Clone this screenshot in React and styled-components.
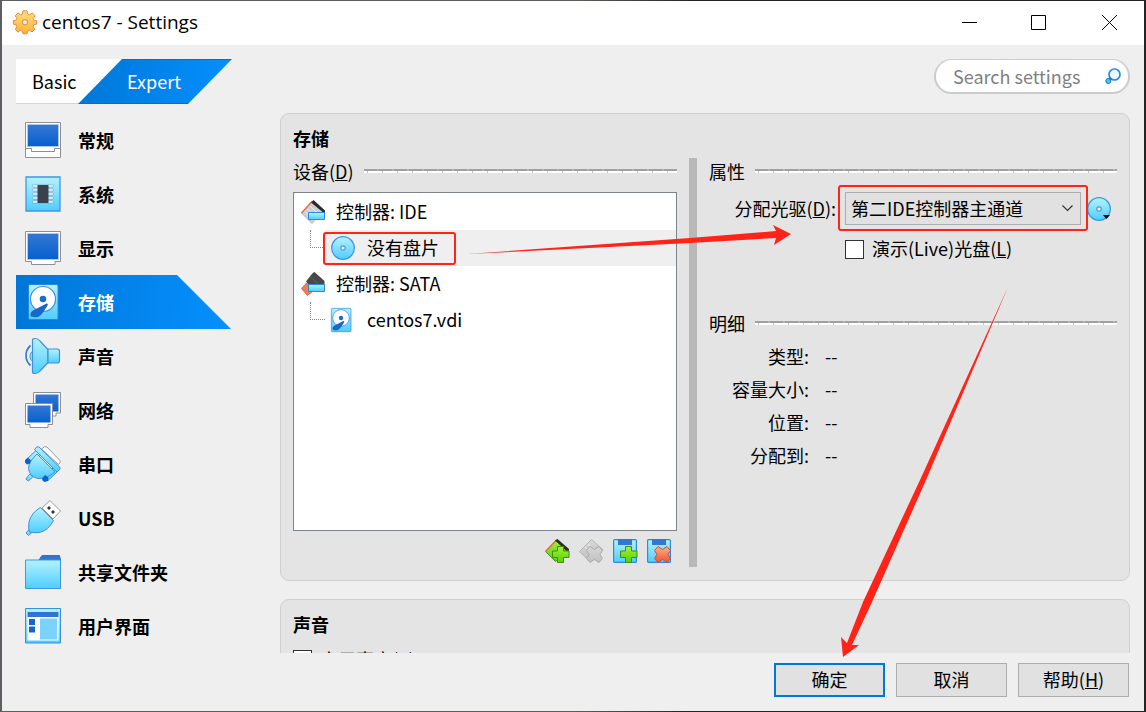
import React from "react";
import styled, { createGlobalStyle, css } from "styled-components";

const GlobalStyle = createGlobalStyle`
  *, *::before, *::after { box-sizing: border-box; }
  body { margin: 0; }
  body, button, input, select {
    font-family: "Noto Sans CJK SC", "Noto Sans", sans-serif;
    font-size: 18px;
    line-height: 26px;
    color: #000;
  }
  button { margin: 0; padding: 0; border: 0; background: none; }
`;

/* ---------- window frame ---------- */

const Desktop = styled.div`
  height: 100vh;
  min-height: 400px;
  display: flex;
  padding: 1px 2px;
  background: linear-gradient(to right, #5c6064 0 50%, #242424 60%);
`;

const Window = styled.div`
  position: relative;
  flex: 1;
  min-width: 0;
  display: flex;
  flex-direction: column;
  background: #efefef;
`;

const TitleBar = styled.header`
  flex: none;
  display: flex;
  align-items: center;
  height: 44px;
  padding: 0 0 2px 11px;
  background: #fff;
`;

const Title = styled.h1`
  flex: 1;
  margin: 0 0 0 5px;
  font-family: "Open Sans", "Noto Sans", sans-serif;
  font-size: 19px;
  font-weight: 400;
`;

const CaptionButton = styled.button`
  display: grid;
  place-items: center;
  width: 70px;
  height: 42px;
`;

const Glyph = styled.svg`
  display: block;
  flex: none;
  overflow: visible;
`;

/* ---------- mode tabs and search ---------- */

const TopRow = styled.div`
  flex: none;
  display: flex;
  justify-content: space-between;
  align-items: flex-start;
  padding: 14px 14px 9px;
`;

const Tabs = styled.div`
  display: flex;
`;

const Tab = styled.button`
  height: 45px;
  ${(p) =>
    p.$active
      ? css`
          width: 154px;
          margin-left: -44px;
          padding: 0 2px 2px 0;
          color: #fff;
          border-top: 1px solid #0a6cc4;
          border-bottom: 1px solid #0a6cc4;
          background: linear-gradient(100deg, #0076d6, #0590ff);
          clip-path: polygon(44px 0, 100% 0, calc(100% - 44px) 100%, 0 100%);
        `
      : css`
          width: 106px;
          padding-left: 16px;
          text-align: left;
          background: #fff;
          border-bottom: 1px solid #d4d4d4;
        `}
`;

const SearchBox = styled.label`
  display: flex;
  align-items: center;
  width: 196px;
  height: 35px;
  padding: 0 7px 1px 17px;
  background: #fff;
  border: 2px solid #cbcbcb;
  border-top-width: 1px;
  border-radius: 18px;
`;

const SearchInput = styled.input`
  flex: 1;
  min-width: 0;
  height: 26px;
  padding: 0;
  border: 0;
  outline: 0;
  background: transparent;
  &::placeholder { color: #7f7f7f; opacity: 1; }
`;

/* ---------- body ---------- */

const Main = styled.main`
  flex: 1;
  min-height: 0;
  display: flex;
  gap: 49px;
  padding: 0 14px;
  overflow: hidden;
`;

const Nav = styled.nav`
  flex: none;
  width: 215px;
`;

const NavItem = styled.a`
  display: flex;
  align-items: center;
  gap: 17px;
  height: 54px;
  padding-left: 9px;
  font-weight: 700;
  text-decoration: none;
  color: ${(p) => (p.$active ? "#fff" : "#000")};
  ${(p) =>
    p.$active &&
    css`
      background: linear-gradient(100deg, #0076d6, #0590ff);
      clip-path: polygon(0 0, calc(100% - 54px) 0, 100% 100%, 0 100%);
    `}
`;

const Pages = styled.div`
  flex: 1;
  min-width: 0;
  display: flex;
  flex-direction: column;
  gap: 18px;
`;

const Panel = styled.section`
  flex: none;
  padding: 12px 12px 13px;
  background: #e4e4e4;
  border: 1px solid #cfcfcf;
  border-radius: 9px;
`;

const PanelTitle = styled.h2`
  margin: 0;
  padding-bottom: 8px;
  font-size: 18px;
  line-height: 24px;
  font-weight: 700;
`;

const Split = styled.div`
  display: grid;
  grid-template-columns: minmax(0, 384fr) 8px minmax(0, 408fr);
  column-gap: 12px;
`;

const Splitter = styled.div`
  background: #b8b8b8;
`;

const Legend = styled.h3`
  display: flex;
  align-items: center;
  gap: 10px;
  height: 28px;
  margin: 0;
  padding-bottom: 2px;
  font-size: 18px;
  font-weight: 400;
  white-space: nowrap;
  &::after {
    content: "";
    flex: 1;
    height: 4px;
    background:
      repeating-linear-gradient(to right, #a0a0a0 0 13px, #b4b4b4 13px 15px) top / 100% 2px no-repeat,
      repeating-linear-gradient(to right, #fff 0 3px, #c4c4c4 3px 4px, #fff 4px 15px) bottom / 100% 2px no-repeat;
  }
`;

/* ---------- device tree ---------- */

const Tree = styled.ul`
  height: 339px;
  margin: 6px 0 8px;
  padding: 1px 0;
  list-style: none;
  background: #fff;
  border: 1px solid #7e848c;
`;

const TreeRow = styled.li`
  display: flex;
  align-items: center;
  gap: 11px;
  height: 36px;
  padding-left: 7px;
`;

const RowText = styled.span`
  padding-bottom: 2px;
`;

const Branch = styled.span`
  align-self: flex-start;
  flex: none;
  width: 15px;
  height: 18px;
  margin-left: 9px;
  border-left: 1px dotted #888;
  border-bottom: 1px dotted #888;
`;

const ChildCell = styled.span`
  position: relative;
  flex: 1;
  display: flex;
  align-items: center;
  gap: 12px;
  height: 36px;
  margin-left: -11px;
  padding-left: 6px;
  background: ${(p) => (p.$selected ? "#efefef" : "none")};
`;

const Mark = styled.span`
  position: absolute;
  inset: ${(p) => p.$inset};
  width: ${(p) => p.$width || "auto"};
  border: 2px solid #ff2318;
  border-radius: 3px;
  pointer-events: none;
`;

const TreeTools = styled.div`
  display: flex;
  justify-content: flex-end;
  gap: 10px;
  padding: 0 6px 4px 0;
`;

/* ---------- attribute form ---------- */

const FormRow = styled.div`
  display: flex;
  align-items: center;
  padding: 6px 6px 0 0;
`;

const FieldLabel = styled.label`
  flex: none;
  width: 127px;
  margin-right: 9px;
  padding-bottom: 2px;
  text-align: right;
  white-space: nowrap;
`;

const SelectBox = styled.div`
  position: relative;
  flex: 1;
  min-width: 0;
  margin-right: 6px;
  & > svg { position: absolute; right: 8px; top: 13px; pointer-events: none; }
`;

const Select = styled.select`
  display: block;
  width: 100%;
  height: 33px;
  padding: 0 26px 2px 5px;
  appearance: none;
  color: #000;
  background: #e1e1e1;
  border: 1px solid #adadad;
  border-radius: 0;
`;

const CheckRow = styled.label`
  display: flex;
  align-items: center;
  gap: 8px;
  margin: 10px 0 0 136px;
`;

const TopCheckRow = styled(CheckRow)`
  align-items: flex-start;
  margin: 6px 0 0;
  line-height: 18px;
`;

const Check = styled.input`
  flex: none;
  appearance: none;
  width: 19px;
  height: 19px;
  margin: 0;
  background: #fff;
  border: 1px solid #333;
`;

const Details = styled.dl`
  margin: 2px 0 0;
`;

const DetailRow = styled.div`
  display: flex;
  gap: 16px;
  line-height: 33px;
  & > dt { width: 100px; text-align: right; }
  & > dd { margin: 0; }
`;

const Spaced = styled.div`
  margin-top: 47px;
`;

/* ---------- footer ---------- */

const Footer = styled.footer`
  flex: none;
  display: flex;
  justify-content: flex-end;
  gap: 11px;
  padding: 10px 15px 14px;
`;

const PushButton = styled.button`
  width: 111px;
  height: 34px;
  padding-bottom: 2px;
  background: #e1e1e1;
  border: ${(p) => (p.$primary ? "2px solid #0078d7" : "1px solid #adadad")};
`;

const Arrows = styled.svg`
  position: absolute;
  top: -1px;
  left: -2px;
  width: 1146px;
  height: 712px;
  pointer-events: none;
`;

/* ---------- icons ---------- */

const Defs = styled.svg`
  position: absolute;
  width: 0;
  height: 0;
`;

const Gradients = () => (
  <Defs aria-hidden="true">
    <defs>
      {[
        ["gCyan", "#b4f2ff", "#4fcdfd"],
        ["gBlue", "#3577d0", "#0560d2"],
        ["gGold", "#ffe078", "#fdb137"],
        ["gGreen", "#a6f03c", "#55d000"],
        ["gRed", "#ffb08c", "#f4512a"],
        ["gGrey", "#d8d8d8", "#c0c0c0"],
      ].map(([id, a, b]) => (
        <linearGradient key={id} id={id} x1="0" y1="0" x2="0" y2="1">
          <stop offset="0" stopColor={a} />
          <stop offset="1" stopColor={b} />
        </linearGradient>
      ))}
    </defs>
  </Defs>
);

const Icon = ({ size = 36, box = size, children }) => (
  <Glyph width={size} height={size} viewBox={`0 0 ${box} ${box}`} fill="none" aria-hidden="true">
    {children}
  </Glyph>
);

const Gear = () => (
  <Icon size={24}>
    <path
      d="M10 .8h4l.6 3.200 2 .9L19.400 3l2.600 2.800-1.900 2.600.9 1.900 2.600.4v3.400l-2.700.6-.8 2 1.700 2.500-2.700 2.800-2.500-1.700-2 .8-.6 2.700h-4l-.6-2.700-2-.8L5 22.100l-2.800-2.700 1.700-2.600-.8-2-2.700-.6v-3.500l2.700-.5.9-1.900-1.800-2.500L5 3l2.500 1.900 2-.9z"
      fill="url(#gGold)" stroke="#e58a48" strokeWidth="1" strokeLinejoin="round"
    />
    <circle cx="12" cy="12.200" r="2.500" fill="#fffaf0" stroke="#dc9a6a" strokeWidth="1.200" />
  </Icon>
);

const GeneralIcon = () => (
  <Icon>
    <path d="M.5.5h35v35H.500z" fill="#fff" stroke="#8f8f8f" />
    <path d="M2.500 2.500h31v22h-31z" fill="url(#gBlue)" stroke="#a9c8f2" />
    <path d="M1 26.500h5.500v3h23v-3H35" stroke="#8f8f8f" />
  </Icon>
);

const SystemIcon = () => (
  <Icon>
    <path d="M1 1h34v34H1z" fill="url(#gCyan)" stroke="#3f97e0" strokeWidth="1.300" />
    {[10, 14, 18, 22, 26].map((y) => (
      <rect key={y} x="7.500" y={y - 1.200} width="21" height="2.300" rx="1" fill="#f4fdff" stroke="#6b9ab8" strokeWidth=".6" />
    ))}
    <path d="M12.500 9h11v18h-11z" fill="#39414f" />
  </Icon>
);

const DisplayIcon = () => (
  <Icon>
    <path d="M.5 1.500h35v30H30V34.500H6.500v-3h-6z" fill="#fff" stroke="#8f8f8f" />
    <path d="M2.500 3.500h31v26h-31z" fill="url(#gBlue)" stroke="#a9c8f2" />
  </Icon>
);

const DiskShape = () => (
  <>
    <rect x="3.500" y=".5" width="29.500" height="35" rx="1.500" fill="url(#gCyan)" stroke="#2a86de" />
    <circle cx="18" cy="15" r="12.500" fill="#fff" stroke="#3f8fdf" strokeWidth="1.200" />
    <circle cx="18" cy="15" r="3.300" fill="#1f6ac8" />
    <path d="M20.500 20c2-1.300 3 .2 1.800 2-3 4.500-5.300 8.500-8.300 10.500-2 1.200-8 1-8.500-.7-.4-2 .5-4.500 3-5.500z" fill="#1767cc" />
  </>
);

const StorageIcon = () => <Icon><DiskShape /></Icon>;

const AudioIcon = () => (
  <Icon>
    <path d="M5.500 7.500C-.500 13-.500 22 5.500 27.500" stroke="#2f7fd6" strokeWidth="1.700" />
    <path d="M8 13.500c-4 0-4 9.500 0 9.500z" fill="#8fe4ff" stroke="#3f8fdf" />
    <path d="M7.500 2Q7.500.5 10 .5q3 0 5 2.500l8 8.500v13l-8 8.500q-2 2.500-5 2.500-2.500 0-2.500-1.500z" fill="url(#gCyan)" stroke="#3f8fdf" strokeWidth="1.200" />
    <path d="M23 11h9q2.500 0 2.500 2.500v9q0 2.500-2.500 2.500h-9z" fill="url(#gCyan)" stroke="#3f8fdf" strokeWidth="1.200" />
  </Icon>
);

const NetworkIcon = () => (
  <Icon>
    <path d="M8.500.5h27v20.500H31v3H13v-3H8.500z" fill="#fff" stroke="#8f8f8f" />
    <path d="M10.500 2.500h23v17h-23z" fill="url(#gBlue)" />
    <path d="M.5 11.500h27v21H23V35.500H5v-3H.500z" fill="#fff" stroke="#8f8f8f" />
    <path d="M2.500 13.500h23v17h-23z" fill="url(#gBlue)" />
  </Icon>
);

const SerialIcon = () => (
  <Icon>
    <path d="M16.500 3Q19.500-.500 22 1l13 13.500q1 1.500-1.500 4z" fill="#fff" stroke="#999" />
    <path d="M.8 33l4-5 3 3-4.500 4z" fill="url(#gCyan)" stroke="#3f8fdf" />
    <path d="M2.500 12.500l8.500-8 4 4-9 8zM20 30.500l8-8.500 4 4-9 8.500z" fill="url(#gCyan)" stroke="#3f8fdf" />
    <path d="M12 8l18 18-5 3.500q-6 3.500-12 3Q4.500 31 3.500 22.500q0-4.500 3-8.500z" fill="url(#gCyan)" stroke="#3f8fdf" />
    <path d="M9.500 3.500Q12-.500 14 1l21 20.500q1 1.500-3 4.500z" fill="url(#gCyan)" stroke="#3f8fdf" strokeLinejoin="round" />
    <path d="M0 14l3-2.500 3 3-1 3-3 1-2-2zM17 32.500l3-3.500 3.500 2.500-.5 3.500-3.500 1-2-1.500z" fill="#0a62d0" />
  </Icon>
);

const UsbIcon = () => (
  <Icon>
    <path d="M17 8l8-7.500L35.500 11 28 19z" fill="#fff" stroke="#999" />
    <path d="M22 8l2-2 2 2-2 2zM26 12l2-2 2 2-2 2z" fill="#333" />
    <path d="M1 33l3.500-4 3 3-4 3.500z" fill="url(#gCyan)" stroke="#3f8fdf" />
    <path d="M15.500 7.500L28.500 20.500Q23 31 14 32.500q-5 .5-9.500-.5Q3 28 4 22q2-9 11.500-14.500z" fill="url(#gCyan)" stroke="#3f8fdf" />
  </Icon>
);

const FolderIcon = () => (
  <Icon>
    <path d="M14 6l3-4.500h17.500L35.500 6z" fill="#3175d2" stroke="#2f70c8" />
    <path d="M.5 6h35v28.500H.500z" fill="url(#gCyan)" stroke="#3f97e0" />
  </Icon>
);

const InterfaceIcon = () => (
  <Icon>
    <path d="M.5.5h35v34.500H.500z" fill="url(#gCyan)" stroke="#3a8fdc" />
    <path d="M2.500 4h31v28.500h-31z" fill="#fff" />
    <path d="M2.500 4h31v5h-31z" fill="#2f74d0" />
    <path d="M4 11h6v6H4zM4 18.500h6v6H4z" fill="#1264d0" />
    <path d="M15 10.500h17v21H15z" fill="#7bd2ff" />
  </Icon>
);

const DiscShape = () => (
  <>
    <circle cx="12" cy="12" r="11.300" fill="url(#gCyan)" stroke="#3d97dc" strokeWidth="1.300" />
    <circle cx="12" cy="12" r="2.200" fill="#e8faff" stroke="#5a97cc" strokeWidth="1.200" />
  </>
);

const ControllerIcon = ({ sata }) => (
  <Icon size={24}>
    {sata ? (
      <>
        <path d="M13.500 0Q12.500 0 10 3L5 9.500l7 9h11.500V9z" fill="#484848" />
        <path d="M9 4.500l11 10" stroke="#666" strokeWidth=".8" />
        <path d="M5.500 11L.5 16.500 6.500 23.500l6-5z" fill="#f07a52" stroke="#cf5532" strokeWidth=".8" />
      </>
    ) : (
      <>
        <path d="M11 1.500L.5 13 11 23.500 22 12z" fill="#cfcfcf" stroke="#aaa" strokeWidth=".8" />
        <path d="M11 1.500L.5 13" stroke="#e5703c" strokeWidth="1.400" />
        <path d="M9 6l11 11M6.500 9l10 10M4 11.500l9.500 9.500" stroke="#eee" />
        <path d="M12.500 0L24 10.500V14L10 2.500z" fill="#2b2b2b" />
      </>
    )}
    <path d="M7.500 12.500h16v7h-16z" fill="url(#gCyan)" stroke="#2a8ce0" />
  </Icon>
);

const plus = "M12.500 7.500h6v4.500h5.500v6.500h-5.500v5h-6v-5h-5V12h5z";
const cross = "M11 7.500l4.500 3 4.500-3 3.500 4-2.500 4 2.500 4-3.500 4-4.500-3-4.500 3-3.500-4 2.500-4-2.500-4z";

const AddControllerIcon = () => (
  <Icon size={24}>
    <path d="M11.500 1L.5 12.500l10 10L22 12z" fill="url(#gGreen)" stroke="#4f8a1e" />
    <path d="M11.500 1L.5 12.500" stroke="#d9723c" strokeWidth="1.300" />
    <path d="M12.500 0L24 10v2.500h-2L10 1.500z" fill="#2d2d2d" />
    <path d={plus} fill="url(#gGreen)" stroke="#3f8f12" />
  </Icon>
);

const RemoveControllerIcon = () => (
  <Icon size={24}>
    <path d="M12.500.5L.5 12.500l10 10L24 11z" fill="url(#gGrey)" stroke="#b5b5b5" />
    <path d="M9 5l9 9M6 8l9 9" stroke="#eee" />
    <path d={cross} fill="url(#gGrey)" stroke="#a9a9a9" />
  </Icon>
);

const Floppy = ({ remove }) => (
  <Icon size={24}>
    <rect x=".6" y=".6" width="22.800" height="22.800" rx="1" fill="url(#gCyan)" stroke="#2a8ce0" strokeWidth="1.200" />
    <path d="M5 0h14v6H5z" fill="#2f78d6" />
    <path d={remove ? cross : plus} fill={remove ? "url(#gRed)" : "url(#gGreen)"} stroke={remove ? "#c9502e" : "#3f8f12"} />
  </Icon>
);

const PAGES = [
  ["常规", GeneralIcon],
  ["系统", SystemIcon],
  ["显示", DisplayIcon],
  ["存储", StorageIcon],
  ["声音", AudioIcon],
  ["网络", NetworkIcon],
  ["串口", SerialIcon],
  ["USB", UsbIcon],
  ["共享文件夹", FolderIcon],
  ["用户界面", InterfaceIcon],
];

const DETAILS = ["类型:", "容量大小:", "位置:", "分配到:"];

export default function App() {
  return (
    <Desktop>
      <GlobalStyle />
      <Gradients />
      <Window>
        <TitleBar>
          <Gear />
          <Title>centos7 - Settings</Title>
          <CaptionButton aria-label="Minimize">
            <Icon size={16}><path d="M1 8.500h15" stroke="#000" /></Icon>
          </CaptionButton>
          <CaptionButton aria-label="Maximize">
            <Icon size={16}><path d="M.5 1.500h14v14H.500z" stroke="#000" /></Icon>
          </CaptionButton>
          <CaptionButton aria-label="Close">
            <Icon size={16}><path d="M1 1l15 15M16 1L1 16" stroke="#000" /></Icon>
          </CaptionButton>
        </TitleBar>

        <TopRow>
          <Tabs>
            <Tab>Basic</Tab>
            <Tab $active>Expert</Tab>
          </Tabs>
          <SearchBox>
            <SearchInput type="text" placeholder="Search settings" aria-label="Search settings" />
            <Icon size={16}>
              <circle cx="9.500" cy="6.500" r="5.500" fill="#eefaff" stroke="#2a86e8" strokeWidth="1.700" />
              <path d="M6 10l-2 1.500" stroke="#1c6fd0" strokeWidth="2.500" />
              <circle cx="3.300" cy="13" r="2.500" fill="#4cc4fb" stroke="#1c6fd0" />
            </Icon>
          </SearchBox>
        </TopRow>

        <Main>
          <Nav>
            {PAGES.map(([name, PageIcon]) => (
              <NavItem key={name} href="#" $active={name === "存储"}>
                <PageIcon />
                {name}
              </NavItem>
            ))}
          </Nav>

          <Pages>
            <Panel>
              <PanelTitle>存储</PanelTitle>
              <Split>
                <div>
                  <Legend><span>设备(<u>D</u>)</span></Legend>
                  <Tree>
                    <TreeRow><ControllerIcon /><RowText>控制器: IDE</RowText></TreeRow>
                    <TreeRow>
                      <Branch />
                      <ChildCell $selected>
                        <Icon size={24}><DiscShape /></Icon>
                        <RowText>没有盘片</RowText>
                        <Mark $inset="2px auto 1px -2px" $width="133px" />
                      </ChildCell>
                    </TreeRow>
                    <TreeRow><ControllerIcon sata /><RowText>控制器: SATA</RowText></TreeRow>
                    <TreeRow>
                      <Branch />
                      <ChildCell>
                        <Icon size={24} box={36}><g transform="translate(-3 0)"><DiskShape /></g></Icon>
                        <RowText>centos7.vdi</RowText>
                      </ChildCell>
                    </TreeRow>
                  </Tree>
                  <TreeTools>
                    <button aria-label="Add controller"><AddControllerIcon /></button>
                    <button aria-label="Remove controller"><RemoveControllerIcon /></button>
                    <button aria-label="Add attachment"><Floppy /></button>
                    <button aria-label="Remove attachment"><Floppy remove /></button>
                  </TreeTools>
                </div>

                <Splitter />

                <div>
                  <Legend>属性</Legend>
                  <FormRow>
                    <FieldLabel htmlFor="drive">分配光驱(<u>D</u>):</FieldLabel>
                    <SelectBox>
                      <Select id="drive">
                        <option>第二IDE控制器主通道</option>
                      </Select>
                      <Glyph width="11" height="7" viewBox="0 0 11 7" fill="none" aria-hidden="true">
                        <path d="M.5.5l5 5 5-5" stroke="#333" strokeWidth="1.200" />
                      </Glyph>
                      <Mark $inset="-7px -7px -6px -7px" />
                    </SelectBox>
                    <button aria-label="Choose disc">
                      <Icon size={24}>
                        <DiscShape />
                        <path d="M16 18h7l-3.500 4z" fill="#000" />
                      </Icon>
                    </button>
                  </FormRow>
                  <CheckRow>
                    <Check type="checkbox" />
                    <RowText>演示(Live)光盘(<u>L</u>)</RowText>
                  </CheckRow>
                  <Spaced>
                    <Legend>明细</Legend>
                  </Spaced>
                  <Details>
                    {DETAILS.map((name) => (
                      <DetailRow key={name}><dt>{name}</dt><dd>--</dd></DetailRow>
                    ))}
                  </Details>
                </div>
              </Split>
            </Panel>

            <Panel>
              <PanelTitle>声音</PanelTitle>
              <TopCheckRow>
                <Check type="checkbox" />
                <span>启用声音(<u>E</u>)</span>
              </TopCheckRow>
            </Panel>
          </Pages>
        </Main>

        <Footer>
          <PushButton $primary>确定</PushButton>
          <PushButton>取消</PushButton>
          <PushButton>帮助(<u>H</u>)</PushButton>
        </Footer>

        <Arrows viewBox="0 0 1146 712" fill="#ff2318" aria-hidden="true">
          <path d="M468 254L690 238 776 231 773 225 791 234 774 245 776 238 690 243z" />
          <path d="M1008 287L920 480 863 602 847 643 841 637 843 657 859 645 852 645 872 602 926 480z" />
        </Arrows>
      </Window>
    </Desktop>
  );
}
